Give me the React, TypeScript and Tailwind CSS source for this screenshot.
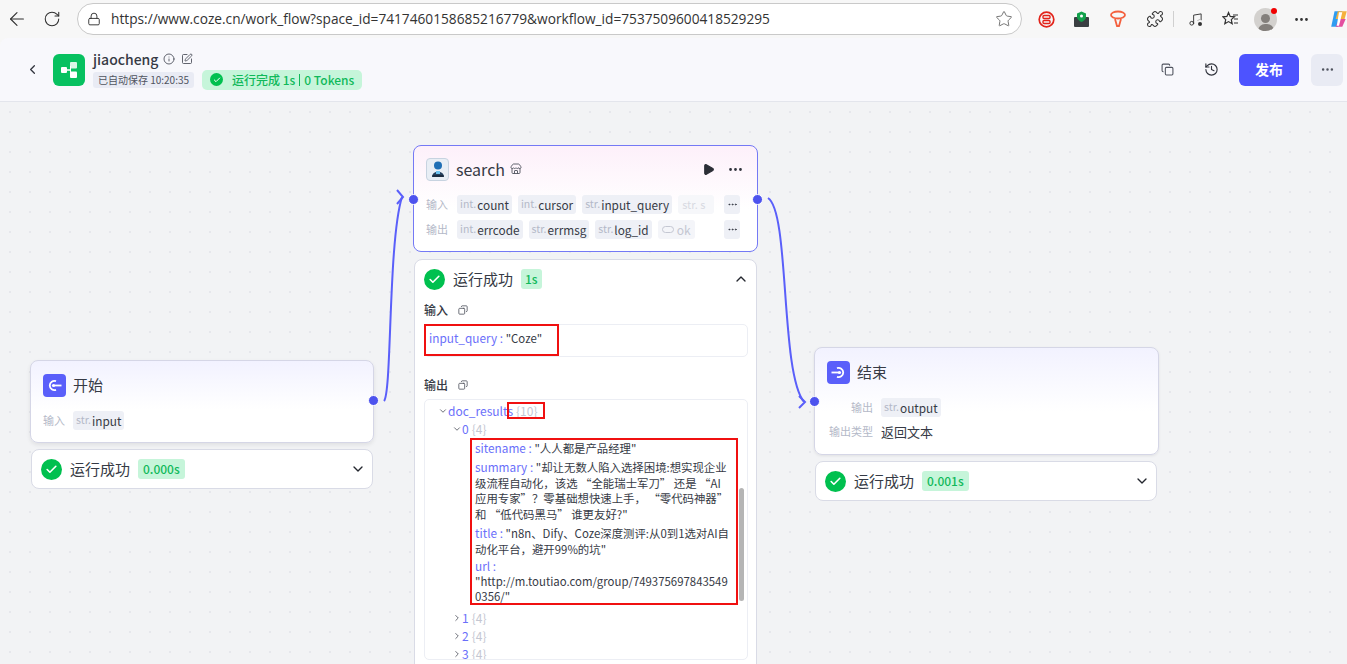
import { ArrowLeft, Check, ChevronDown, ChevronLeft, ChevronRight, ChevronUp, Copy, History, Info, Lock, MoreHorizontal, Music, Play, Puzzle, RotateCw, SquarePen, Star, Store } from "lucide-react";

const sans = "font-['Noto_Sans_CJK_SC','Noto_Sans',sans-serif]";

function Tag({ type, name }: { type: string; name: string }) {
  return (
    <span className="flex h-[19px] shrink-0 items-center rounded-[3px] bg-[#eef0f6] px-[3px] text-[11.8px] leading-none">
      <span className="mr-[1px] text-[10.5px] text-[#b4b9c8]">{type}</span>
      <span className="text-[#363a45]">{name}</span>
    </span>
  );
}

function SuccessIcon({ size = "h-[21px] w-[21px]" }: { size?: string }) {
  return (
    <span className={`flex shrink-0 items-center justify-center rounded-full bg-[#00c04f] ${size}`}>
      <Check className="h-[13px] w-[13px] text-white" strokeWidth={3} />
    </span>
  );
}

function ResultBar({ time, className }: { time: string; className: string }) {
  return (
    <div className={`absolute flex h-[40px] items-center rounded-[8px] border border-[#d9dbe6] bg-white pl-[9px] pr-[9px] ${className}`}>
      <SuccessIcon />
      <span className="ml-[8px] text-[15px] text-[#363a45]">运行成功</span>
      <span className="ml-[8px] rounded-[3px] bg-[#c6f5da] px-[5px] py-[1px] text-[12px] font-medium text-[#10b95a]">{time}</span>
      <ChevronDown className="ml-auto -mr-[3px] h-[16px] w-[16px] text-[#23262e]" />
    </div>
  );
}

function Port({ className }: { className: string }) {
  return <span className={`absolute box-content h-[9px] w-[9px] rounded-full border border-white bg-[#4d53ee] ${className}`} />;
}

function MoreChip() {
  return (
    <span className="ml-auto flex h-[19px] w-[16px] shrink-0 items-center justify-center rounded-[3px] bg-[#eef0f6]">
      <MoreHorizontal className="h-[11px] w-[11px] text-[#363a45]" />
    </span>
  );
}

function Key({ children }: { children: string }) {
  return <span className="text-[11.8px] text-[#6a6ffa]">{children} : </span>;
}

function BrowserBar() {
  return (
    <div className="flex h-[38px] shrink-0 items-center bg-[#f7f7f7] text-[#2f2f2f]">
      <ArrowLeft className="ml-[6px] h-[22px] w-[22px] shrink-0" strokeWidth={1.2} />
      <RotateCw className="ml-[15px] h-[18px] w-[18px] shrink-0" strokeWidth={1.4} />
      <div className="ml-[16px] flex h-[32px] w-[945px] shrink-0 items-center rounded-full border border-[#c9c9c9] bg-white pl-[9px] pr-[8px]">
        <Lock className="h-[14px] w-[14px]" strokeWidth={1.6} />
        <span className="ml-[10px] font-['Open_Sans',sans-serif] text-[13.7px] text-[#333]">https://www.coze.cn/work_flow?space_id=7417460158685216779&amp;workflow_id=7537509600418529295</span>
        <Star className="ml-auto h-[18px] w-[18px] text-[#666]" strokeWidth={1.2} />
      </div>
      <svg className="ml-[16px] h-[17px] w-[17px] shrink-0" viewBox="0 0 17 17" fill="none" stroke="#e2231a">
        <circle cx="8.5" cy="8.5" r="7.3" strokeWidth="1.7" />
        <rect x="5" y="4.5" width="7" height="3" rx="1" strokeWidth="1.4" />
        <rect x="5" y="9.5" width="7" height="3" rx="1" strokeWidth="1.4" />
      </svg>
      <svg className="ml-[18px] h-[17px] w-[17px] shrink-0" viewBox="0 0 17 17">
        <rect x="1" y="6" width="15" height="10" rx="1" fill="#3a3f42" />
        <path d="M8.5 0.5 L13 2.5 V6 C13 8.5 10.5 10 8.5 11 C6.5 10 4 8.5 4 6 V2.5Z" fill="#12a14b" />
        <circle cx="8.5" cy="5" r="1.5" fill="#fff" />
      </svg>
      <svg className="ml-[19px] h-[18px] w-[18px] shrink-0" viewBox="0 0 18 18" fill="none" stroke="#f4603e" strokeWidth="1.8">
        <ellipse cx="9" cy="5" rx="7" ry="3.5" />
        <path d="M6 9 L8 16 H10 L12 9" />
      </svg>
      <Puzzle className="ml-[19px] h-[18px] w-[18px] shrink-0 text-[#333]" strokeWidth={1.4} />
      <span className="ml-[9px] h-[16px] w-px shrink-0 bg-[#d0d0d0]" />
      <span className="relative ml-[14px] h-[15px] w-[15px] shrink-0">
        <Music className="h-[15px] w-[15px] text-[#333]" strokeWidth={1.5} />
        <span className="absolute -bottom-[1px] -right-[1px] h-[8px] w-[8px] rounded-full border-2 border-[#f7f7f7] bg-[#333]" />
      </span>
      <svg className="ml-[19px] h-[17px] w-[17px] shrink-0" viewBox="0 0 17 17" fill="none" stroke="#333" strokeWidth="1.2">
        <path d="M6.5 1.5 L8.2 5.4 L12.5 5.8 L9.3 8.6 L10.2 12.8 L6.5 10.6 L2.8 12.8 L3.7 8.6 L0.8 5.8 L4.9 5.4Z" />
        <path d="M11 4 H16 M12 8 H16 M12 12 H16" />
      </svg>
      <div className="relative ml-[15px] flex h-[23px] w-[23px] shrink-0 flex-col items-center justify-end overflow-hidden rounded-full bg-[#d3d1ce]">
        <span className="mb-[1px] h-[9px] w-[9px] rounded-full bg-[#837f7b]" />
        <span className="h-[7px] w-[16px] rounded-t-full bg-[#837f7b]" />
      </div>
      <span className="relative -ml-[6px] -mt-[16px] h-[6px] w-[6px] shrink-0 rounded-full bg-[#f00000]" />
      <MoreHorizontal className="ml-[16px] h-[17px] w-[17px] shrink-0 text-[#333]" />
      <svg className="ml-[19px] h-[20px] w-[20px] shrink-0" viewBox="0 0 18 18">
        <path d="M5 2 H12 L8 16 H2 Z" fill="#2f9cf0" />
        <path d="M8 2 H16 L14 9 H6 Z" fill="#f5b13d" />
        <path d="M9 9 H15 L12 16 H6 Z" fill="#e34fa0" />
        <path d="M9 3 H12 L9 15 H7 Z" fill="#fff" />
      </svg>
    </div>
  );
}

function Header() {
  return (
    <header className="flex h-[64px] shrink-0 items-center rounded-tl-[8px] border-b border-[#e3e5ec] bg-[#f8f8fc] pl-[25px] pr-[4px]">
      <ChevronLeft className="h-[15px] w-[15px] text-[#30333c]" strokeWidth={2} />
      <div className="ml-[13px] flex h-[32px] w-[32px] items-center justify-center rounded-[6px] bg-[#07c160]">
        <svg className="h-[18px] w-[18px]" viewBox="0 0 18 18" fill="#fff">
          <rect x="1" y="6" width="6" height="6" rx="1" />
          <rect x="10" y="1" width="7" height="6.5" rx="1" opacity="0.85" />
          <rect x="10" y="10.5" width="7" height="6.5" rx="1" />
          <path d="M7 8.2 H10 V5 H11 V13 H10 V9.8 H7Z" />
        </svg>
      </div>
      <div className="ml-[8px] flex flex-col">
        <div className="flex h-[19px] items-center">
          <span className="w-[70px] text-[14px] font-medium leading-[19px] text-[#363a45]">jiaocheng</span>
          <Info className="h-[12px] w-[12px] text-[#50545f]" strokeWidth={1.8} />
          <SquarePen className="ml-[6px] h-[12px] w-[12px] text-[#50545f]" strokeWidth={1.8} />
        </div>
        <div className="mt-[1px] flex items-center">
          <span className="flex h-[16px] w-[101px] items-center justify-center rounded-[3px] bg-[#e9ebf4] text-[10px] text-[#50545f]">已自动保存 10:20:35</span>
          <span className="ml-[8px] flex h-[20px] w-[160px] items-center rounded-[5px] bg-[#c6f5da] pl-[8px] text-[12px] font-medium text-[#10b95a]">
            <SuccessIcon size="h-[13px] w-[13px] [&>svg]:h-[8px] [&>svg]:w-[8px]" />
            <span className="ml-[9px] whitespace-nowrap">运行完成 1s</span>
            <span className="mx-[4px] h-[12px] w-px bg-[#10b95a]" />
            <span className="whitespace-nowrap">0 Tokens</span>
          </span>
        </div>
      </div>
      <Copy className="ml-auto h-[13px] w-[13px] text-[#50545f]" strokeWidth={2} />
      <History className="ml-[30px] h-[15px] w-[15px] text-[#30333c]" strokeWidth={1.8} />
      <button className="ml-[20px] flex h-[32px] w-[60px] items-center justify-center rounded-[6px] bg-[#4d53ff] text-[14px] font-bold text-white">发布</button>
      <span className="ml-[12px] flex h-[32px] w-[32px] items-center justify-center rounded-[6px] bg-[#e9ebf4]">
        <MoreHorizontal className="h-[15px] w-[15px] text-[#50545f]" />
      </span>
    </header>
  );
}

function StartNode() {
  return (
    <div className="absolute left-[30px] top-[258px] h-[83px] w-[344px] rounded-[8px] border border-[#d5d6e6] bg-gradient-to-b from-[#f2f2ff] to-white to-60% px-[12px] pt-[13px] shadow-[0_2px_4px_rgba(0,0,0,0.08)]">
      <div className="flex h-[23px] items-center">
        <span className="flex h-[23px] w-[23px] items-center justify-center rounded-[4px] bg-[#5a5ffa]">
          <svg className="h-[15px] w-[15px]" viewBox="0 0 15 15" fill="none" stroke="#fff" strokeWidth="1.8">
            <path d="M9 3.2 A4.6 4.6 0 1 0 9 11.8" />
            <circle cx="6.5" cy="7.5" r="1.6" fill="#fff" stroke="none" />
            <path d="M7 7.5 H14.5" />
          </svg>
        </span>
        <span className="ml-[7px] text-[15px] text-[#363a45]">开始</span>
      </div>
      <div className="mt-[14px] flex h-[19px] items-center">
        <span className="w-[30px] text-[11px] text-[#b4b9c8]">输入</span>
        <Tag type="str." name="input" />
      </div>
      <Port className="-right-[6px] top-[34px]" />
    </div>
  );
}

function SearchNode() {
  return (
    <div className="absolute left-[413px] top-[43px] h-[107px] w-[345px] rounded-[8px] border border-[#7479f5] bg-gradient-to-b from-[#fdf0fa] to-white to-60% px-[12px] pt-[11px]">
      <div className="flex h-[24px] items-center">
        <span className="flex h-[23px] w-[23px] items-center justify-center rounded-[4px] border border-[#c7d3e0] bg-[#e8eef5]">
          <svg className="h-[18px] w-[18px]" viewBox="0 0 18 18">
            <circle cx="9" cy="5.5" r="4" fill="#1f6fb5" />
            <path d="M3 17 C3 10 15 10 15 17Z" fill="#24405e" />
            <rect x="7" y="11" width="4" height="3" fill="#6cc1ee" />
            <rect x="3.5" y="15" width="11" height="2" fill="#1b2c40" />
          </svg>
        </span>
        <span className="ml-[7px] text-[16px] text-[#363a45]">search</span>
        <Store className="ml-[5px] h-[12px] w-[12px] text-[#50545f]" strokeWidth={1.8} />
        <Play className="ml-auto h-[13px] w-[13px] fill-[#2b2e36] text-[#2b2e36]" />
        <MoreHorizontal className="ml-[12px] mr-[1px] h-[17px] w-[17px] text-[#30333c]" />
      </div>
      <div className="mt-[14px] flex h-[19px] items-center gap-[6px] pr-[5px]">
        <span className="w-[25px] shrink-0 text-[11px] text-[#b4b9c8]">输入</span>
        <Tag type="int." name="count" />
        <Tag type="int." name="cursor" />
        <Tag type="str." name="input_query" />
        <span className="flex h-[19px] w-[36px] items-center overflow-hidden whitespace-nowrap rounded-[3px] bg-[#f6f7fa] pl-[4px] text-[11px] text-[#d8dae2]">str. s</span>
        <MoreChip />
      </div>
      <div className="mt-[6px] flex h-[19px] items-center gap-[6px] pr-[5px]">
        <span className="w-[25px] shrink-0 text-[11px] text-[#b4b9c8]">输出</span>
        <Tag type="int." name="errcode" />
        <Tag type="str." name="errmsg" />
        <Tag type="str." name="log_id" />
        <span className="flex h-[19px] items-center rounded-[3px] bg-[#f4f5f9] px-[4px] text-[12px] text-[#c4c7d2]">
          <span className="mr-[3px] h-[7px] w-[12px] rounded-full border border-[#c4c7d2]" />ok
        </span>
        <MoreChip />
      </div>
      <Port className="-left-[6px] top-[48px]" />
      <Port className="-right-[6px] top-[48px]" />
    </div>
  );
}

function TreeRow({ open, label, count, indent }: { open?: boolean; label: string; count: string; indent: string }) {
  const Icon = open ? ChevronDown : ChevronRight;
  return (
    <div className={`flex h-[18px] items-center leading-[18px] ${indent}`}>
      <Icon className="h-[10px] w-[10px] text-[#50545f]" />
      <span className="text-[#6a6ffa]">{label}</span>
      <span className="ml-[3px] text-[#c4c7d2]">{count}</span>
    </div>
  );
}

function RunPanel() {
  return (
    <div className="absolute left-[414px] top-[157px] h-[420px] w-[343px] rounded-[8px] border border-[#d9dbe6] bg-white pl-[9px] pr-[8px] text-[#363a45]">
      <div className="flex h-[38px] items-center">
        <SuccessIcon />
        <span className="ml-[8px] text-[15px]">运行成功</span>
        <span className="ml-[8px] rounded-[3px] bg-[#c6f5da] px-[4px] py-[1px] text-[12px] font-medium text-[#10b95a]">1s</span>
        <ChevronUp className="ml-auto -mr-[1px] h-[16px] w-[16px] text-[#23262e]" />
      </div>
      <div className="mt-[3px] flex h-[18px] items-center text-[12px] font-medium">
        输入
        <Copy className="ml-[10px] h-[10px] w-[10px] -scale-x-100 text-[#50545f]" strokeWidth={2} />
      </div>
      <div className="mt-[5px] h-[33px] rounded-[5px] border border-[#eceef4] px-[4px] pt-[4px] text-[11.4px] leading-[18px]">
        <Key>input_query</Key>"Coze"
      </div>
      <div className="mt-[19px] flex h-[18px] items-center text-[12px] font-medium">
        输出
        <Copy className="ml-[10px] h-[10px] w-[10px] -scale-x-100 text-[#50545f]" strokeWidth={2} />
      </div>
      <div className="relative mt-[5px] h-[261px] overflow-hidden rounded-[5px] border border-[#eceef4] pt-[2px] text-[12px]">
        <TreeRow open label="doc_results" count="{10}" indent="pl-[13px]" />
        <TreeRow open label="0" count="{4}" indent="pl-[27px]" />
        <div className="ml-[50px] mt-[2px] w-[262px] text-[11.4px] leading-[15.5px]">
          <div className="h-[19px] leading-[16px]"><Key>sitename</Key>"人人都是产品经理"</div>
          <div className="whitespace-nowrap">
            <div><Key>summary</Key>"却让无数人陷入选择困境:想实现企业</div>
            <div>级流程自动化，该选 “全能瑞士军刀” 还是 “AI</div>
            <div>应用专家”？零基础想快速上手， “零代码神器”</div>
            <div>和 “低代码黑马” 谁更友好?"</div>
          </div>
          <div className="mt-[3px] whitespace-nowrap">
            <div><Key>title</Key>"n8n、Dify、Coze深度测评:从0到1选对AI自</div>
            <div>动化平台，避开99%的坑"</div>
          </div>
          <div className="mt-[1px] whitespace-nowrap">
            <div className="text-[11.8px] text-[#6a6ffa]">url :</div>
            <div>"http://m.toutiao.com/group/749375697843549</div>
            <div>0356/"</div>
          </div>
        </div>
        <div className="mt-[4px]">
          <TreeRow label="1" count="{4}" indent="pl-[27px]" />
          <TreeRow label="2" count="{4}" indent="pl-[27px]" />
          <TreeRow label="3" count="{4}" indent="pl-[27px]" />
        </div>
        <span className="absolute right-[3px] top-[88px] h-[113px] w-[5px] rounded-full bg-[#b5b5b5]" />
        <span className="absolute left-[45px] top-[38px] h-[167px] w-[268px] border-2 border-[#f01010]" />
        <span className="absolute left-[82px] top-[2px] h-[17px] w-[38px] border-2 border-[#f01010]" />
      </div>
      <span className="absolute left-[9px] top-[64px] h-[32px] w-[135px] border-2 border-[#f01010]" />
    </div>
  );
}

function EndNode() {
  return (
    <div className="absolute left-[814px] top-[245px] h-[108px] w-[345px] rounded-[8px] border border-[#d5d6e6] bg-gradient-to-b from-[#f2f2ff] to-white to-60% px-[12px] pt-[13px] shadow-[0_1px_3px_rgba(0,0,0,0.08)]">
      <div className="flex h-[23px] items-center">
        <span className="flex h-[23px] w-[23px] items-center justify-center rounded-[4px] bg-[#5a5ffa]">
          <svg className="h-[15px] w-[15px]" viewBox="0 0 15 15" fill="none" stroke="#fff" strokeWidth="1.8">
            <path d="M6 3.2 A4.6 4.6 0 1 1 6 11.8" />
            <circle cx="8.5" cy="7.5" r="1.6" fill="#fff" stroke="none" />
            <path d="M0.5 7.5 H8" />
          </svg>
        </span>
        <span className="ml-[7px] text-[15px] text-[#363a45]">结束</span>
      </div>
      <div className="mt-[14px] flex h-[19px] items-center">
        <span className="w-[54px] pr-[8px] text-right text-[11px] text-[#b4b9c8]">输出</span>
        <Tag type="str." name="output" />
      </div>
      <div className="mt-[5px] flex h-[19px] items-center">
        <span className="w-[54px] whitespace-nowrap pr-[8px] text-right text-[11px] text-[#b4b9c8]">输出类型</span>
        <span className="text-[13px] text-[#363a45]">返回文本</span>
      </div>
      <Port className="-left-[6px] top-[48px]" />
    </div>
  );
}

export default function App() {
  return (
    <div className={`flex h-[664px] w-[1347px] flex-col overflow-hidden bg-[#f7f7f7] ${sans}`}>
      <BrowserBar />
      <Header />
      <main className="relative flex-1 overflow-hidden bg-[#f2f3f5] bg-[radial-gradient(#e6e7ec_1px,transparent_1px)] bg-[length:20px_20px]">
        <svg className="absolute inset-0 h-full w-full" fill="none" stroke="#5a5ffa" strokeWidth="2">
          <path d="M384 299 C392 290 388 140 402 95" />
          <path d="M397 88 L403 95 L397 102" />
          <path d="M768 96 C790 110 780 270 804 300" />
          <path d="M799 294 L805 300 L799 306" />
        </svg>
        <StartNode />
        <ResultBar time="0.000s" className="left-[31px] top-[347px] w-[342px]" />
        <SearchNode />
        <RunPanel />
        <EndNode />
        <ResultBar time="0.001s" className="left-[815px] top-[359px] w-[342px]" />
      </main>
    </div>
  );
}
